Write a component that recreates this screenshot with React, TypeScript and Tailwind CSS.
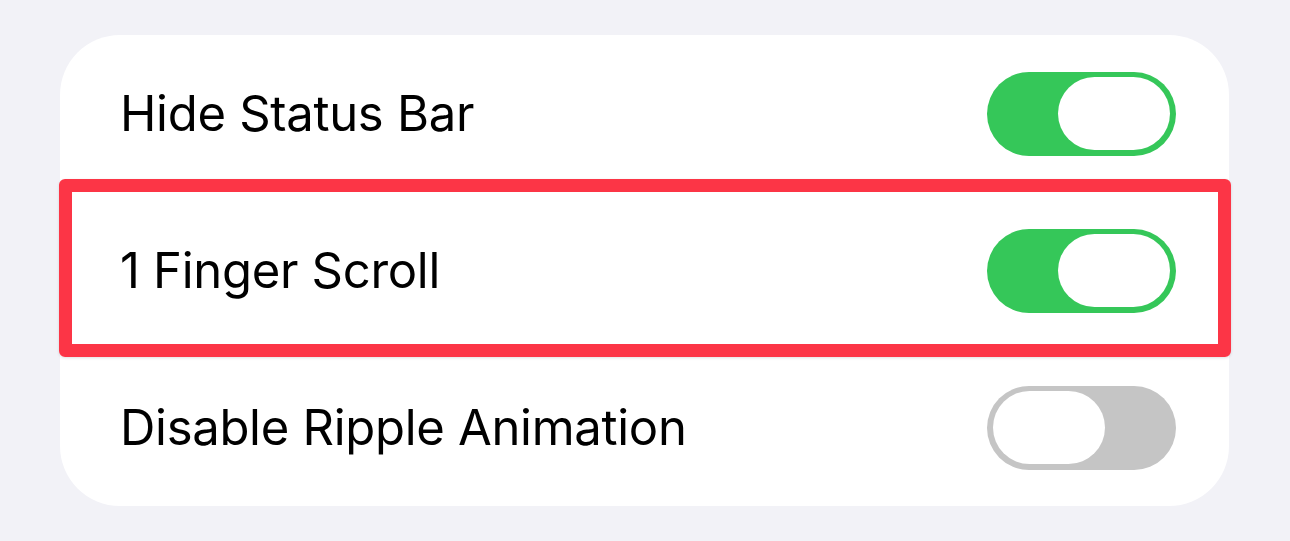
import React from 'react';

interface ToggleProps {
  on: boolean;
}

// iOS style switch
const Toggle = ({ on }: ToggleProps) => {
  return (
    <div
      className={`flex items-center w-[189px] h-[84px] rounded-full px-[6px] ${
        on ? 'bg-[#35c759] justify-end' : 'bg-[#c5c5c5] justify-start'
      }`}
    >
      <div className="w-[112px] h-[73px] rounded-full bg-white" />
    </div>
  );
};

const rows = [
  { label: 'Hide Status Bar', on: true },
  { label: '1 Finger Scroll', on: true },
  { label: 'Disable Ripple Animation', on: false },
];

export default function App() {
  return (
    <div className="w-[1290px] h-[541px] bg-[#f2f2f7] pt-[35px] pl-[60px]">
      <div className="relative w-[1169px] h-[471px] rounded-[60px] bg-white">
        {rows.map((row) => (
          <div
            key={row.label}
            className="flex items-center justify-between h-[157px] pl-[60px] pr-[53px]"
          >
            <span className="text-[49px] text-black font-['Inter',sans-serif] tracking-[-0.3px]">
              {row.label}
            </span>
            <Toggle on={row.on} />
          </div>
        ))}

        {/* Highlight box */}
        <div className="absolute left-[-1px] top-[144px] w-[1172px] h-[178px] border-[13px] border-[#fc3546] rounded-[6px] shadow-[0_1px_3px_rgba(0,0,0,0.12)]" />
      </div>
    </div>
  );
}
